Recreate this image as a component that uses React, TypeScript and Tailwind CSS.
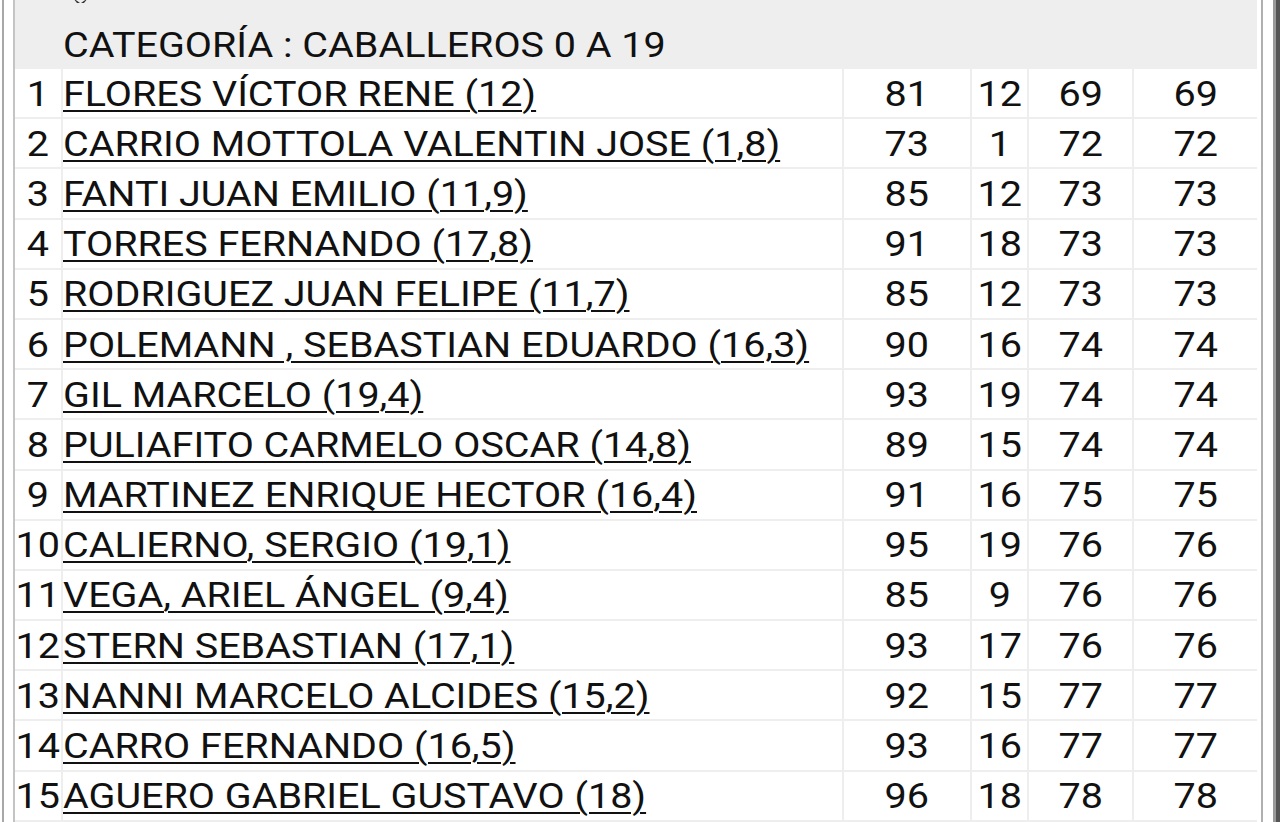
import React from 'react';

interface Result {
  pos: number;
  name: string;
  gross: number;
  hcp: number;
  net: number;
  total: number;
}

const results: Result[] = [
  { pos: 1, name: 'FLORES VÍCTOR RENE (12)', gross: 81, hcp: 12, net: 69, total: 69 },
  { pos: 2, name: 'CARRIO MOTTOLA VALENTIN JOSE (1,8)', gross: 73, hcp: 1, net: 72, total: 72 },
  { pos: 3, name: 'FANTI JUAN EMILIO (11,9)', gross: 85, hcp: 12, net: 73, total: 73 },
  { pos: 4, name: 'TORRES FERNANDO (17,8)', gross: 91, hcp: 18, net: 73, total: 73 },
  { pos: 5, name: 'RODRIGUEZ JUAN FELIPE (11,7)', gross: 85, hcp: 12, net: 73, total: 73 },
  { pos: 6, name: 'POLEMANN , SEBASTIAN EDUARDO (16,3)', gross: 90, hcp: 16, net: 74, total: 74 },
  { pos: 7, name: 'GIL MARCELO (19,4)', gross: 93, hcp: 19, net: 74, total: 74 },
  { pos: 8, name: 'PULIAFITO CARMELO OSCAR (14,8)', gross: 89, hcp: 15, net: 74, total: 74 },
  { pos: 9, name: 'MARTINEZ ENRIQUE HECTOR (16,4)', gross: 91, hcp: 16, net: 75, total: 75 },
  { pos: 10, name: 'CALIERNO, SERGIO (19,1)', gross: 95, hcp: 19, net: 76, total: 76 },
  { pos: 11, name: 'VEGA, ARIEL ÁNGEL (9,4)', gross: 85, hcp: 9, net: 76, total: 76 },
  { pos: 12, name: 'STERN SEBASTIAN (17,1)', gross: 93, hcp: 17, net: 76, total: 76 },
  { pos: 13, name: 'NANNI MARCELO ALCIDES (15,2)', gross: 92, hcp: 15, net: 77, total: 77 },
  { pos: 14, name: 'CARRO FERNANDO (16,5)', gross: 93, hcp: 16, net: 77, total: 77 },
  { pos: 15, name: 'AGUERO GABRIEL GUSTAVO (18)', gross: 96, hcp: 18, net: 78, total: 78 },
];

// the source screenshot is stretched sideways, so glyphs get a horizontal scale
function Num({ v }: { v: number }) {
  return (
    <div className="bg-white h-[48.2px] pt-[2px] flex items-center justify-center">
      <span className="inline-block scale-x-[1.13]">{v}</span>
    </div>
  );
}

function ResultRow({ r }: { r: Result }) {
  return (
    <>
      <Num v={r.pos} />
      <div className="bg-white h-[48.2px] pt-[2px] flex items-center whitespace-nowrap overflow-hidden">
        <a className="inline-block origin-left scale-x-[1.128] underline decoration-[2px] underline-offset-[4px] cursor-pointer">
          {r.name}
        </a>
      </div>
      <Num v={r.gross} />
      <Num v={r.hcp} />
      <Num v={r.net} />
      <Num v={r.total} />
    </>
  );
}

export default function App() {
  return (
    <div
      className="w-[1280px] h-[822px] overflow-hidden bg-white flex text-[#111111] text-[35px] leading-none"
      style={{ fontFamily: 'Roboto, "Noto Sans", sans-serif' }}
    >
      <div className="w-[2px]" />
      <div className="w-[2px] bg-[#a8a8a8]" />
      <div className="w-[9px]" />
      <div className="w-[2px] bg-[#c4c4c4]" />

      <div className="flex-1 bg-[#eeeeee] flex flex-col">
        <div className="h-[69px] flex flex-col">
          <div className="h-[4px] overflow-hidden pl-[57px]">
            <svg width="17" height="10" viewBox="0 0 17 10" className="-mt-[6px]">
              <path d="M1 4 L5 9 L8 9 Z M16 4 L12 9 L9 9 Z" fill="#333333" />
            </svg>
          </div>
          <div className="flex-1 flex items-center pl-[48px] pt-[18px]">
            <span className="inline-block origin-left scale-x-[1.128]">CATEGORÍA : CABALLEROS 0 A 19</span>
          </div>
        </div>

        <div className="grid grid-cols-[46px_779px_126px_55px_103px_123px] gap-[2px]">
          {results.map((r) => (
            <ResultRow key={r.pos} r={r} />
          ))}
        </div>
      </div>

      <div className="w-[4px]" />
      <div className="w-[2px] bg-[#b0b0b0]" />
      <div className="w-[10px]" />
      <div className="w-[3px] bg-[#9a9a9a]" />
      <div className="w-[4px] bg-[#555555]" />
    </div>
  );
}
